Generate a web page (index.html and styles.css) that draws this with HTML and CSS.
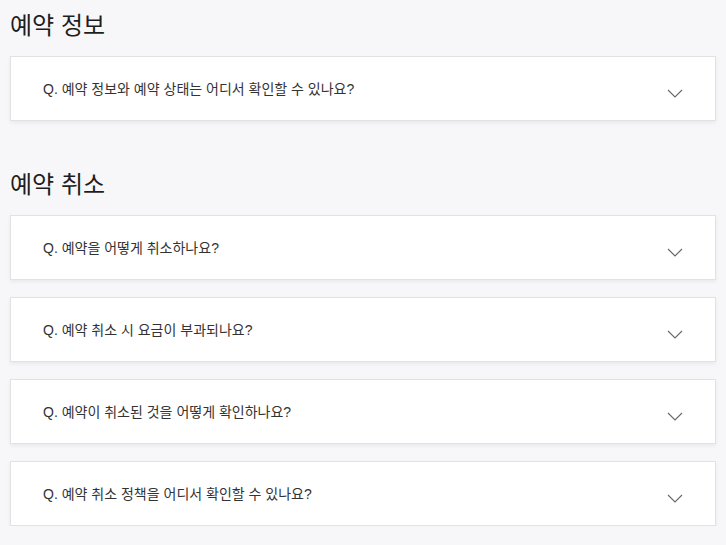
FILE: index.html
```html
<!DOCTYPE html>
<html lang="ko">
<head>
<meta charset="utf-8">
<link rel="stylesheet" href="styles.css">
</head>
<body>
<main class="faq">
  <section class="faq-section">
    <h2 class="faq-title">예약 정보</h2>
    <div class="faq-list">
      <div class="faq-item"><span class="faq-q">Q. 예약 정보와 예약 상태는 어디서 확인할 수 있나요?</span><svg class="chev" width="16" height="9" viewBox="0 0 16 9"><path d="M1 1l7 7 7-7" fill="none" stroke="#666" stroke-width="1.1"/></svg></div>
    </div>
  </section>
  <section class="faq-section">
    <h2 class="faq-title">예약 취소</h2>
    <div class="faq-list">
      <div class="faq-item"><span class="faq-q">Q. 예약을 어떻게 취소하나요?</span><svg class="chev" width="16" height="9" viewBox="0 0 16 9"><path d="M1 1l7 7 7-7" fill="none" stroke="#666" stroke-width="1.1"/></svg></div>
      <div class="faq-item"><span class="faq-q">Q. 예약 취소 시 요금이 부과되나요?</span><svg class="chev" width="16" height="9" viewBox="0 0 16 9"><path d="M1 1l7 7 7-7" fill="none" stroke="#666" stroke-width="1.1"/></svg></div>
      <div class="faq-item"><span class="faq-q">Q. 예약이 취소된 것을 어떻게 확인하나요?</span><svg class="chev" width="16" height="9" viewBox="0 0 16 9"><path d="M1 1l7 7 7-7" fill="none" stroke="#666" stroke-width="1.1"/></svg></div>
      <div class="faq-item"><span class="faq-q">Q. 예약 취소 정책을 어디서 확인할 수 있나요?</span><svg class="chev" width="16" height="9" viewBox="0 0 16 9"><path d="M1 1l7 7 7-7" fill="none" stroke="#666" stroke-width="1.1"/></svg></div>
    </div>
  </section>
</main>
</body>
</html>
```
FILE: styles.css
```css
html, body {
  margin: 0;
  padding: 0;
  background: #f7f7f9;
}
body {
  font-family: "Liberation Sans", "Noto Sans CJK KR", sans-serif;
  color: #222;
}
.faq {
  padding: 0 10px 0 10px;
  display: flex;
  flex-direction: column;
  gap: 38px;
}
.faq-title {
  margin: 0;
  padding-top: 10px;
  height: 56px;
  box-sizing: border-box;
  font-family: "Noto Sans CJK KR", sans-serif;
  font-weight: 400;
  font-size: 24px;
  line-height: 28px;
  color: #1e1e1e;
}
.faq-list {
  display: flex;
  flex-direction: column;
  gap: 17px;
}
.faq-item {
  height: 65px;
  box-sizing: border-box;
  background: #fff;
  border: 1px solid #e2e2e4;
  box-shadow: 0 2px 4px rgba(0, 0, 0, 0.06);
  display: flex;
  align-items: center;
  justify-content: space-between;
  padding: 0 32px;
}
.faq-q {
  font-size: 14px;
  color: #333;
  margin-top: -2px;
}
.chev {
  display: block;
  margin-top: 9px;
}
```
